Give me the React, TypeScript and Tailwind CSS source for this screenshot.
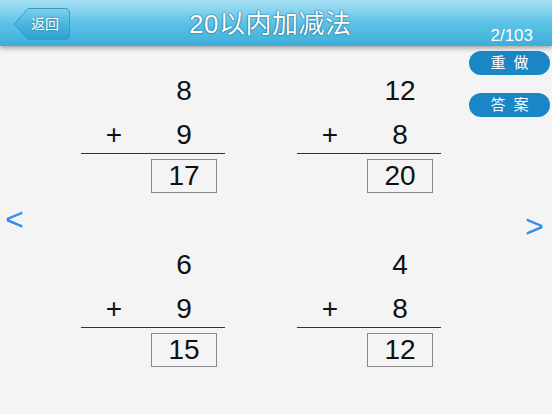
import React from 'react';

type Problem = { a: number; b: number; answer: number };

const problems: Problem[] = [
  { a: 8, b: 9, answer: 17 },
  { a: 12, b: 8, answer: 20 },
  { a: 6, b: 9, answer: 15 },
  { a: 4, b: 8, answer: 12 },
];

const cjk = "font-['Liberation_Sans','Noto_Sans_CJK_SC',sans-serif]";

const ProblemCard: React.FC<{ p: Problem }> = ({ p }) => (
  <div className="w-[144px] text-[28px] text-[#111] leading-none">
    <div className="grid grid-cols-[70px_66px_8px] h-[45px] items-center">
      <span />
      <span className="text-center">{p.a}</span>
    </div>
    <div className="grid grid-cols-[70px_66px_8px] h-[40px] items-end">
      <span className="text-center leading-[36px] pr-[4px]">+</span>
      <span className="text-center leading-[36px]">{p.b}</span>
    </div>
    <div className="border-t border-[#333]" />
    <div className="grid grid-cols-[70px_66px_8px] pt-[5px]">
      <span />
      <div className="h-[34px] border border-[#8a8a8a] text-center leading-[32px]">
        {p.answer}
      </div>
    </div>
  </div>
);

export default function App() {
  return (
    <div className={`w-[552px] h-[414px] overflow-hidden bg-[#f4f4f4] ${cjk}`}>
      {/* Header */}
      <header className="relative z-10 flex h-[46px] bg-gradient-to-b from-[#a6e0f4] via-[#5cc2e7] to-[#3caed9] shadow-[0_2px_5px_rgba(0,0,0,0.35)]">
        <div className="ml-[14px] mt-[8px] relative w-[56px] h-[32px]">
          <svg className="absolute inset-0" width="56" height="32" viewBox="0 0 56 32">
            <defs>
              <linearGradient id="bk" x1="0" y1="0" x2="0" y2="1">
                <stop offset="0" stopColor="#7fd0ee" />
                <stop offset="0.5" stopColor="#49b6de" />
                <stop offset="1" stopColor="#2f9fcc" />
              </linearGradient>
            </defs>
            <path
              d="M14 0.5 H51 Q55.5 0.5 55.5 5 V27 Q55.5 31.5 51 31.5 H14 L0.5 16 Z"
              fill="url(#bk)"
              stroke="#3b9bc4"
              strokeWidth="1"
            />
          </svg>
          <span className="relative flex h-full items-center pl-[17px] text-[14px] text-white [text-shadow:0_0_2px_#2a6f90]">
            返回
          </span>
        </div>
        <h1 className="ml-[119px] mt-[9px] text-[26px] leading-[30px] text-white tracking-[0.5px] [text-shadow:0_0_1px_#1f5f80,0_0_2px_#1f5f80]">
          20以内加减法
        </h1>
        <span className="ml-auto mr-[19px] mt-[25px] text-[17px] leading-[22px] text-white">
          2/103
        </span>
      </header>

      {/* Body */}
      <div className="flex h-[368px]">
        <div className="w-[81px] pt-[155px] pl-[5px]">
          <span className="text-[32px] leading-[36px] text-[#2f8ff0]">&lt;</span>
        </div>

        <div className="grid grid-cols-[144px_144px] gap-x-[72px] gap-y-[49px] content-start pt-[22px]">
          {problems.map((p, i) => (
            <ProblemCard key={i} p={p} />
          ))}
        </div>

        <div className="ml-auto w-[83px] pt-[5px] flex flex-col items-start">
          <button className="w-[81px] h-[24px] rounded-full bg-[#1a86c6] text-white text-[15px] tracking-[8px] pl-[8px] leading-[24px]">
            重做
          </button>
          <button className="mt-[18px] w-[81px] h-[24px] rounded-full bg-[#1a86c6] text-white text-[15px] tracking-[8px] pl-[8px] leading-[24px]">
            答案
          </button>
          <span className="mt-[91px] ml-[56px] text-[32px] leading-[36px] text-[#2f8ff0]">&gt;</span>
        </div>
      </div>
    </div>
  );
}
